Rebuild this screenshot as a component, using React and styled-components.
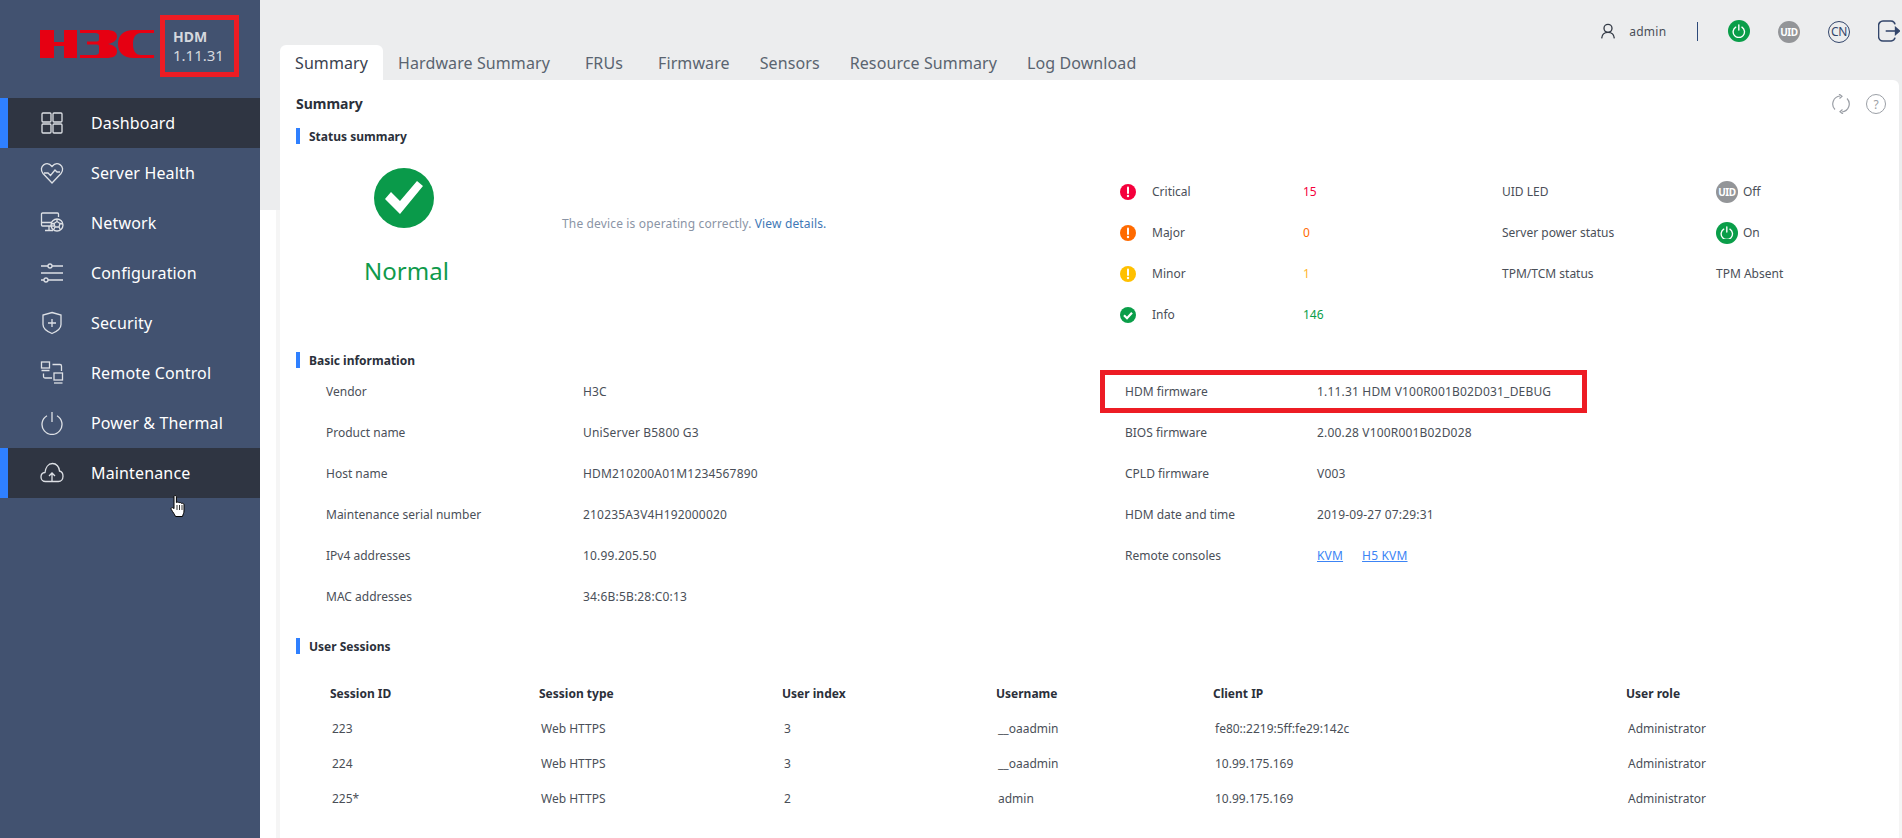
import React from 'react';
import styled, { createGlobalStyle } from 'styled-components';

const menu = [
  { name: 'Dashboard', icon: 'dashboard', active: true },
  { name: 'Server Health', icon: 'health' },
  { name: 'Network', icon: 'network' },
  { name: 'Configuration', icon: 'config' },
  { name: 'Security', icon: 'security' },
  { name: 'Remote Control', icon: 'remote' },
  { name: 'Power & Thermal', icon: 'power' },
  { name: 'Maintenance', icon: 'maintenance', active: true },
];

const tabs = ['Summary', 'Hardware Summary', 'FRUs', 'Firmware', 'Sensors', 'Resource Summary', 'Log Download'];

const alerts = [
  { label: 'Critical', value: '15', color: '#f5003c', mark: 'bang' },
  { label: 'Major', value: '0', color: '#ff6a00', mark: 'bang' },
  { label: 'Minor', value: '1', color: '#ffc000', text: '#ffb52e', mark: 'bang' },
  { label: 'Info', value: '146', color: '#0a9e49', mark: 'check' },
];

const basicLeft = [
  ['Vendor', 'H3C'],
  ['Product name', 'UniServer B5800 G3'],
  ['Host name', 'HDM210200A01M1234567890'],
  ['Maintenance serial number', '210235A3V4H192000020'],
  ['IPv4 addresses', '10.99.205.50'],
  ['MAC addresses', '34:6B:5B:28:C0:13'],
];

const basicRight = [
  ['BIOS firmware', '2.00.28 V100R001B02D028'],
  ['CPLD firmware', 'V003'],
  ['HDM date and time', '2019-09-27 07:29:31'],
];

const sessions = [
  ['223', 'Web HTTPS', '3', '__oaadmin', 'fe80::2219:5ff:fe29:142c', 'Administrator'],
  ['224', 'Web HTTPS', '3', '__oaadmin', '10.99.175.169', 'Administrator'],
  ['225*', 'Web HTTPS', '2', 'admin', '10.99.175.169', 'Administrator'],
];

const sessionCols = ['Session ID', 'Session type', 'User index', 'Username', 'Client IP', 'User role'];
const colWidths = [209, 243, 214, 217, 413, 240];

const MenuIcon = ({ name }) => {
  const shapes = {
    dashboard: (
      <>
        <rect x="2" y="2" width="9" height="9" rx="1" />
        <rect x="13" y="2" width="9" height="9" rx="1" />
        <rect x="2" y="13" width="9" height="9" rx="1" />
        <rect x="13" y="13" width="9" height="9" rx="1" />
      </>
    ),
    health: (
      <>
        <path d="M12 22 3 12.5C.5 9.5 1 5.5 4 3.6 7 1.8 10 3 12 5.5 14 3 17 1.8 20 3.6c3 1.9 3.5 5.9 1 8.9z" />
        <path d="M4 12h4l2.500 2.500L15 9l2 2h3" />
      </>
    ),
    network: (
      <>
        <path d="M14 15H2.500A1 1 0 0 1 1.500 14V3a1 1 0 0 1 1-1h15a1 1 0 0 1 1 1v3" />
        <path d="M1.500 11.500H12M9 15v4M5 19.500h8" />
        <circle cx="17" cy="14" r="6" />
        <path d="m17 10.500 3 2-1 3.500h-4l-1-3.500zM17 8v2.500M23 13l-3-.5M19 16l1.500 3M15 16l-1.500 3M14 12.500l-3 .5" />
      </>
    ),
    config: (
      <>
        <path d="M1 5h7M12 5h11M1 12h22M1 19h3M8 19h15" />
        <circle cx="10" cy="5" r="2" />
        <circle cx="6" cy="19" r="2" />
      </>
    ),
    security: (
      <>
        <path d="M12 1.500 21 4v9.500c0 4-4 7-9 9-5-2-9-5-9-9V4z" />
        <path d="M12 8v8M8 12h8" />
      </>
    ),
    remote: (
      <>
        <rect x="1.500" y="1" width="8" height="6" />
        <path d="M1.500 9.500h8M12.500 3.500H20a1.500 1.500 0 0 1 1.500 1.500v5M3.500 12.500v3a1.500 1.500 0 0 0 1.500 1.500h7" />
        <rect x="14" y="12" width="8.500" height="7" />
        <path d="M14 22h8.500" />
      </>
    ),
    power: (
      <>
        <path d="M7 4.800a10 10 0 1 0 10 0" />
        <path d="M12 1v10" />
      </>
    ),
    maintenance: (
      <>
        <path d="M7 20.500H5.500C3 20.500 1 18.500 1 16s1.800-4.300 4-4.500C5.500 7 8 2.500 12.500 2.500c4 0 6.800 3.500 7 7.500 2 .5 3.500 2.800 3.500 5.200 0 3-2 5.300-4.500 5.300H7z" />
        <path d="M12 20.500v-8M9 15l3-3 3 3" />
      </>
    ),
  };
  return (
    <NavGlyph viewBox="0 0 24 24">
      {shapes[name]}
    </NavGlyph>
  );
};

const Logo = () => (
  <LogoSvg viewBox="0 0 114 28">
    <path d="M0 0h14v12h10V0h13v28H24V16H14v12H0z" />
    <path d="M40 0h26c7 0 11 2 11 6.500 0 3.500-3 6-9 7.500 6 1 9 3.500 9 7.500 0 4.500-4 6.500-11 6.500H40v-3h15c3 0 4-1 4-3v-5.500c0-1.500-1-2-3-2h-9v-3h9c2 0 3-.5 3-2V5.500C59 4 58 3 55 3H40z" />
    <path d="M114 0H94C83 0 78 6 78 14s5 14 16 14h20v-3h-13c-6 0-8-5-8-11s2-11 8-11h13z" />
  </LogoSvg>
);

const PowerBadge = ({ size }) => (
  <Round $size={size} $bg="#0a9e49">
    <svg width={size * 0.62} height={size * 0.62} viewBox="0 0 24 24" fill="none" stroke="#fff" strokeWidth="2.400" strokeLinecap="round">
      <path d="M6.500 5.500a10 10 0 1 0 11 0" />
      <path d="M12 1.500v9" />
    </svg>
  </Round>
);

const UidBadge = () => <Round $size={22} $bg="#939598">UID</Round>;

const StatusDot = ({ color, mark }) => (
  <svg width="16" height="16" viewBox="0 0 16 16">
    <circle cx="8" cy="8" r="8" fill={color} />
    {mark === 'bang' ? (
      <>
        <path d="M8 3.500v5.500" stroke="#fff" strokeWidth="2" strokeLinecap="round" />
        <circle cx="8" cy="12" r="1.200" fill="#fff" />
      </>
    ) : (
      <path d="m4 8.200 3 3 5-5.500" fill="none" stroke="#fff" strokeWidth="2.200" />
    )}
  </svg>
);

const Cursor = () => (
  <HandCursor width="17" height="23" viewBox="0 0 17 23">
    <path
      d="M4 1.500c0-1.300 2.400-1.300 2.400 0v6c.8-.6 2.200-.5 2.600.3.800-.5 2.200-.3 2.500.6 1-.4 2.500 0 2.500 1.300v6.300c0 2-1 3.300-1.500 5.500H5.500C4.500 19 3 17.500 1.300 14.500c-1-1.800 1.200-2.800 2.700-.8z"
      fill="#fff"
      stroke="#000"
      strokeWidth="1"
    />
    <path d="M7 10v5M9.500 10v5M12 10v5" stroke="#000" strokeWidth=".8" />
  </HandCursor>
);

export default function App() {
  return (
    <Page>
      <GlobalStyle />
      <Sidebar>
        <Brand>
          <Logo />
          <VersionBox>
            <b>HDM</b>
            <span>1.11.31</span>
          </VersionBox>
        </Brand>
        <Nav>
          {menu.map((item) => (
            <NavItem key={item.name} $active={item.active}>
              <NavIconSlot>
                <MenuIcon name={item.icon} />
              </NavIconSlot>
              {item.name}
            </NavItem>
          ))}
        </Nav>
        <Cursor />
      </Sidebar>
      <Main>
        <TopBar>
          <UserIcon viewBox="0 0 24 24">
            <circle cx="12" cy="8" r="6" />
            <path d="M2.500 23c.5-6 4-9 9.500-9s9 3 9.500 9" />
          </UserIcon>
          <UserName>admin</UserName>
          <Divider />
          <PowerBadge size={22} />
          <TopSlot><UidBadge /></TopSlot>
          <TopSlot><Round $size={22} $outline>CN</Round></TopSlot>
          <LogoutIcon viewBox="2 1 20 20">
            <path d="M14 2H6.500A4 4 0 0 0 2.500 6v10a4 4 0 0 0 4 4H14a4 4 0 0 0 3.500-3M14 2a4 4 0 0 1 3.500 3" />
            <path d="M9 11h10" />
            <path d="m18 8 3.500 3-3.500 3z" fill="#33466b" />
          </LogoutIcon>
        </TopBar>
        <TabBar>
          {tabs.map((tab, i) => (
            <Tab key={tab} $active={i === 0} $spaced={tab === 'FRUs'}>{tab}</Tab>
          ))}
        </TabBar>
        <Card>
          <CardHeader>
            <CardTitle>Summary</CardTitle>
            <CardTools>
              <ToolIcon viewBox="0 0 20 20">
                <path d="M4 15.500A8 8 0 0 1 9 2" />
                <path d="M16 4.500A8 8 0 0 1 11 18" />
                <path d="m8 0 3 2.200L8.500 4.500M12 20l-3-2.200 2.500-2.300" />
              </ToolIcon>
              <HelpMark>?</HelpMark>
            </CardTools>
          </CardHeader>

          <SectionHeading>Status summary</SectionHeading>
          <StatusRow>
            <Health>
              <svg width="60" height="60" viewBox="0 0 60 60">
                <circle cx="30" cy="30" r="30" fill="#0a9a4a" />
                <path d="m11 31 6-7 9 9 17-20 6 5-23 28z" fill="#fff" />
              </svg>
              <HealthText>Normal</HealthText>
            </Health>
            <Description>
              The device is operating correctly. <DetailLink>View details.</DetailLink>
            </Description>
            <AlertGrid>
              {alerts.map((a) => (
                <AlertRow key={a.label}>
                  <AlertLabel>
                    <StatusDot color={a.color} mark={a.mark} />
                    {a.label}
                  </AlertLabel>
                  <AlertValue $color={a.text || a.color}>{a.value}</AlertValue>
                </AlertRow>
              ))}
            </AlertGrid>
            <StateGrid>
              <StateLabel>UID LED</StateLabel>
              <StateValue><UidBadge />Off</StateValue>
              <StateLabel>Server power status</StateLabel>
              <StateValue><PowerBadge size={22} />On</StateValue>
              <StateLabel>TPM/TCM status</StateLabel>
              <StateValue>TPM Absent</StateValue>
            </StateGrid>
          </StatusRow>

          <SectionHeading $gap={18}>Basic information</SectionHeading>
          <InfoColumns>
            <InfoColumn $width={799}>
              {basicLeft.map(([label, value]) => (
                <InfoRow key={label} $labelWidth={257}>
                  <span>{label}</span>
                  <InfoValue>{value}</InfoValue>
                </InfoRow>
              ))}
            </InfoColumn>
            <InfoColumn>
              <InfoRow $labelWidth={192}>
                <span>HDM firmware</span>
                <InfoValue>1.11.31 HDM V100R001B02D031_DEBUG</InfoValue>
                <Highlight />
              </InfoRow>
              {basicRight.map(([label, value]) => (
                <InfoRow key={label} $labelWidth={192}>
                  <span>{label}</span>
                  <InfoValue>{value}</InfoValue>
                </InfoRow>
              ))}
              <InfoRow $labelWidth={192}>
                <span>Remote consoles</span>
                <Consoles>
                  <ConsoleLink>KVM</ConsoleLink>
                  <ConsoleLink>H5 KVM</ConsoleLink>
                </Consoles>
              </InfoRow>
            </InfoColumn>
          </InfoColumns>

          <SectionHeading $gap={21}>User Sessions</SectionHeading>
          <SessionTable>
            <colgroup>
              {colWidths.map((w, i) => <col key={i} width={w} />)}
            </colgroup>
            <thead>
              <tr>{sessionCols.map((c) => <th key={c}>{c}</th>)}</tr>
            </thead>
            <tbody>
              {sessions.map((row) => (
                <tr key={row[0]}>
                  {row.map((cell, i) => <td key={i}>{cell}</td>)}
                </tr>
              ))}
            </tbody>
          </SessionTable>
        </Card>
      </Main>
    </Page>
  );
}

const font = `'Noto Sans', 'Open Sans', sans-serif`;

const GlobalStyle = createGlobalStyle`
  html, body {
    margin: 0;
    padding: 0;
    height: 100%;
    overflow: hidden;
    background: #fff;
    font-family: ${font};
  }
`;

const Page = styled.div`
  display: flex;
  width: 100%;
  height: 100vh;
  overflow: hidden;
`;

const Sidebar = styled.aside`
  position: relative;
  flex: 0 0 260px;
  background: #425270;
`;

const Brand = styled.div`
  display: flex;
  align-items: flex-start;
  height: 98px;
  padding: 15px 0 0 40px;
  box-sizing: border-box;
`;

const LogoSvg = styled.svg`
  width: 114px;
  height: 28px;
  margin-top: 15px;
  fill: #e60012;
`;

const VersionBox = styled.div`
  display: flex;
  flex-direction: column;
  justify-content: center;
  box-sizing: border-box;
  width: 79px;
  height: 62px;
  margin-left: 6px;
  padding-left: 8px;
  border: 5px solid #ed1c24;
  color: #d5d8de;
  font-size: 15px;
  line-height: 18px;

  b {
    font-size: 14px;
  }
`;

const Nav = styled.nav`
  display: flex;
  flex-direction: column;
`;

const NavItem = styled.a`
  display: flex;
  align-items: center;
  height: 50px;
  box-sizing: border-box;
  color: #fff;
  font-size: 16px;
  letter-spacing: 0.15px;
  background: ${(p) => (p.$active ? '#2f3542' : 'transparent')};
  border-left: 8px solid ${(p) => (p.$active ? '#2f80ff' : 'transparent')};
`;

const NavIconSlot = styled.span`
  display: flex;
  justify-content: center;
  width: 83px;
`;

const NavGlyph = styled.svg`
  width: 24px;
  height: 24px;
  margin-left: 5px;
  fill: none;
  stroke: #dde0e5;
  stroke-width: 1.300;
`;

const HandCursor = styled.svg`
  position: absolute;
  left: 170px;
  top: 495px;
`;

const Main = styled.main`
  flex: 1;
  min-width: 0;
  display: flex;
  flex-direction: column;
  background:
    linear-gradient(#ecedee, #ecedee) top left / 100% 210px no-repeat,
    linear-gradient(#f5f5f5, #f5f5f5) 16px 0 / 4px 100% no-repeat,
    linear-gradient(#f5f5f5, #f5f5f5) right 0 top 0 / 3px 100% no-repeat,
    #fff;
`;

const TopBar = styled.header`
  display: flex;
  align-items: center;
  justify-content: flex-end;
  height: 22px;
  padding: 20px 2px 3px 0;
`;

const UserIcon = styled.svg`
  width: 16px;
  height: 16px;
  margin-right: 13px;
  fill: none;
  stroke: #333a45;
  stroke-width: 2;
`;

const UserName = styled.span`
  font-size: 12px;
  color: #4a4f58;
  letter-spacing: 0.3px;
`;

const Divider = styled.span`
  width: 1.500px;
  height: 19px;
  margin: 0 30px;
  background: #2d4a7a;
`;

const TopSlot = styled.span`
  margin-left: 28px;
`;

const Round = styled.span`
  display: inline-flex;
  align-items: center;
  justify-content: center;
  box-sizing: border-box;
  flex: none;
  width: ${(p) => p.$size}px;
  height: ${(p) => p.$size}px;
  border-radius: 50%;
  background: ${(p) => p.$bg || 'transparent'};
  border: ${(p) => (p.$outline ? '1.500px solid #33466b' : 'none')};
  color: ${(p) => (p.$outline ? '#33466b' : '#fff')};
  font-size: ${(p) => (p.$outline ? '12px' : '10px')};
  font-weight: ${(p) => (p.$outline ? 400 : 700)};
  letter-spacing: -0.4px;
`;

const LogoutIcon = styled.svg`
  width: 22px;
  height: 22px;
  margin-left: 28px;
  fill: none;
  stroke: #33466b;
  stroke-width: 1.400;
`;

const TabBar = styled.div`
  display: flex;
  height: 35px;
  padding-left: 20px;
`;

const Tab = styled.span`
  display: flex;
  align-items: center;
  padding: 0 15px;
  margin: ${(p) => (p.$spaced ? '0 5px' : '0')};
  border-radius: 6px 6px 0 0;
  font-size: 16px;
  letter-spacing: 0.1px;
  color: ${(p) => (p.$active ? '#3a4250' : '#5a6470')};
  background: ${(p) => (p.$active ? '#fff' : 'transparent')};
`;

const Card = styled.section`
  flex: 1;
  margin: 0 3px 0 20px;
  padding-left: 16px;
  background: #fff;
  border-radius: 0 6px 0 0;
`;

const CardHeader = styled.div`
  display: flex;
  align-items: center;
  justify-content: space-between;
  height: 46px;
  padding: 0 13px 2px 0;
`;

const CardTitle = styled.h2`
  margin: 0;
  font-size: 14px;
  font-weight: 700;
  color: #2b303a;
`;

const CardTools = styled.div`
  display: flex;
  align-items: center;
  gap: 15px;
  margin-top: 2px;
`;

const ToolIcon = styled.svg`
  width: 20px;
  height: 20px;
  fill: none;
  stroke: #9b9fa6;
  stroke-width: 1.200;
`;

const HelpMark = styled.span`
  display: flex;
  align-items: center;
  justify-content: center;
  box-sizing: border-box;
  width: 20px;
  height: 20px;
  border: 1px solid #9b9fa6;
  border-radius: 50%;
  color: #9b9fa6;
  font-size: 12px;
`;

const SectionHeading = styled.h3`
  margin: ${(p) => p.$gap || 0}px 0 0;
  padding-left: 9px;
  height: 16px;
  border-left: 4px solid #2f80ff;
  font-size: 12px;
  line-height: 17px;
  font-weight: 700;
  color: #2b303a;
`;

const StatusRow = styled.div`
  display: flex;
  align-items: flex-start;
  height: 166px;
  margin-top: 24px;
`;

const Health = styled.div`
  display: flex;
  flex-direction: column;
  align-items: center;
  flex: 0 0 216px;
`;

const HealthText = styled.div`
  margin: 27px 0 0 5px;
  font-size: 24px;
  line-height: 32px;
  color: #0f9a4b;
`;

const Description = styled.div`
  flex: 0 0 558px;
  padding: 47px 0 0 50px;
  font-size: 12px;
  line-height: 18px;
  letter-spacing: 0.15px;
  color: #8a94a5;
`;

const DetailLink = styled.a`
  color: #4178b6;
`;

const AlertGrid = styled.div`
  flex: 0 0 382px;
  padding-top: 3px;
`;

const AlertRow = styled.div`
  display: flex;
  align-items: center;
  height: 41px;
  font-size: 12px;
`;

const AlertLabel = styled.span`
  display: flex;
  align-items: center;
  gap: 16px;
  width: 183px;
  color: #4a4f58;
`;

const AlertValue = styled.span`
  color: ${(p) => p.$color};
`;

const StateGrid = styled.div`
  display: grid;
  grid-template-columns: 214px 1fr;
  grid-auto-rows: 41px;
  align-items: center;
  padding-top: 3px;
  font-size: 12px;
  color: #4a4f58;
`;

const StateLabel = styled.span``;

const StateValue = styled.span`
  display: flex;
  align-items: center;
  gap: 5px;
`;

const InfoColumns = styled.div`
  display: flex;
  margin-top: 3px;
  padding-left: 30px;
`;

const InfoColumn = styled.div`
  display: flex;
  flex-direction: column;
  flex: ${(p) => (p.$width ? `0 0 ${p.$width}px` : '1')};
`;

const InfoRow = styled.div`
  position: relative;
  display: grid;
  grid-template-columns: ${(p) => p.$labelWidth}px 1fr;
  align-items: center;
  height: 41px;
  font-size: 12px;
  color: #4a4f58;
`;

const InfoValue = styled.span`
  letter-spacing: 0.18px;
`;

const Highlight = styled.span`
  position: absolute;
  left: -25px;
  top: -1px;
  bottom: -1px;
  width: 487px;
  box-sizing: border-box;
  border: 5px solid #ed1c24;
`;

const Consoles = styled.span`
  display: flex;
  gap: 19px;
  letter-spacing: 0.18px;
`;

const ConsoleLink = styled.a`
  color: #3c84f5;
  text-decoration: underline;
`;

const SessionTable = styled.table`
  margin: 21px 0 0 34px;
  border-collapse: collapse;
  table-layout: fixed;
  font-size: 12px;
  color: #4a4f58;

  th {
    height: 36px;
    padding: 0;
    text-align: left;
    font-weight: 700;
    color: #2b303a;
  }

  td {
    height: 35px;
    padding: 0 0 0 2px;
  }
`;
